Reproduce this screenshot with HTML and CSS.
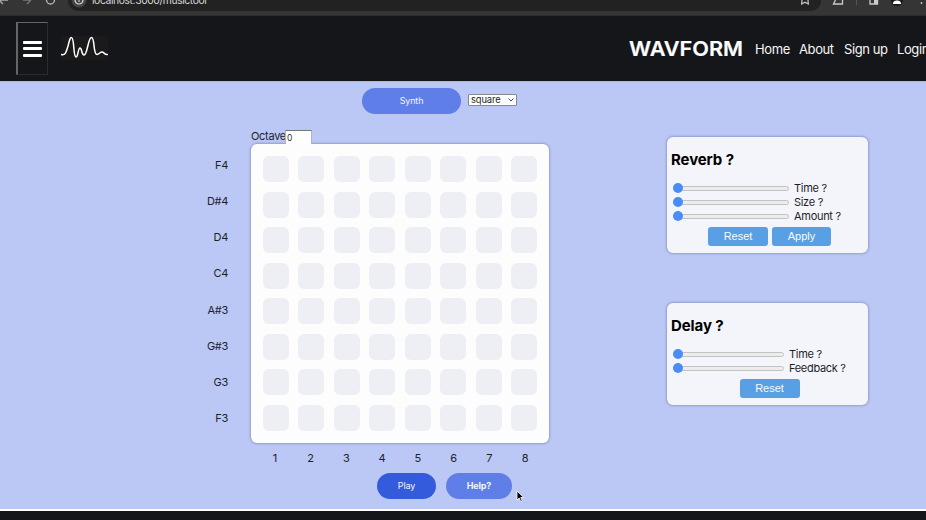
FILE: index.html
```html
<!DOCTYPE html>
<html lang="en">
<head>
<meta charset="utf-8">
<title>Wavform</title>
<link rel="stylesheet" href="styles.css">
</head>
<body>
<div class="browser">
  <svg class="browser-nav" width="62" height="15" viewBox="0 0 62 15" fill="none" stroke-width="1.3">
    <path d="M8 0H0M3 4L-1 0" stroke="#aaa"/><path d="M23 0h8M27 4l4-4" stroke="#777"/><path d="M46.5 0a4 4 0 0 0 8 0" stroke="#bbb"/>
  </svg>
  <div class="address">
    <svg width="18" height="15" viewBox="0 0 18 15" fill="none"><circle cx="9" cy="0" r="7.5" fill="#444"/><circle cx="9" cy="0" r="4" stroke="#ddd" stroke-width="1.2"/><path d="M9 0v2" stroke="#ddd"/></svg>
    <span class="url">localhost:3000/musictool</span>
    <svg class="star" width="12" height="15" viewBox="0 0 12 15" fill="none" stroke="#ccc" stroke-width="1.2"><path d="M3 0l-.3 4L6 2.2 9.3 4 9 0"/></svg>
  </div>
  <svg class="browser-tools" width="105" height="15" viewBox="0 0 105 15" fill="none">
    <path d="M14.500 0L12.500 4H21.500V0" stroke="#ccc" stroke-width="1.3"/><path d="M35.500 0v5" stroke="#555"/>
    <path d="M49 0v4h7.500V0" stroke="#ccc" stroke-width="1.3"/><path d="M53 0h4v4h-4z" fill="#ccc"/>
    <circle cx="76" cy="0" r="6" fill="#171717"/><path d="M72 4c0-3 2-3.500 4-3.500s4 .5 4 3.500z" fill="#fff"/>
    <circle cx="100.500" cy="3" r=".9" fill="#ccc"/>
  </svg>
</div>
<header class="header">
  <button class="menu" aria-label="Menu"><i></i><i></i><i></i></button>
  <svg class="wave" width="47" height="24" viewBox="0 0 47 24"><path class="wave-bg" d="M0 0h47v24H0z"/><path class="wave-line" d="M0 18.500C4 20 5 17 7 10C8.500 4 9 1.500 10.500 1.500C13.500 1.500 12 20.500 15 21C17 21.500 17 12 19 12C21 12 20.500 19 23 19C26.500 19 27 1.500 30.500 1.500C34 1.500 32 18.500 36 18.500C38 18.500 39 16 41 16C43 16 43.500 19 46.500 18.500"/></svg>
  <nav class="nav">
    <svg class="brand" width="116" height="24"><text x="0" y="17.500" textLength="114" lengthAdjust="spacingAndGlyphs">WAVFORM</text></svg>
    <a class="home">Home</a><a class="about">About</a><a class="signup">Sign up</a><a class="login">Login</a>
  </nav>
</header>
<main class="main">
  <div class="toolbar">
    <button class="pill synth">Synth</button>
    <div class="select"><span>square</span><svg width="8" height="6" viewBox="0 0 8 6"><path d="M1.500 1.500l2.500 2.500 2.500-2.500" fill="none" stroke="#333" stroke-width=".9"/></svg></div>
  </div>
  <div class="workspace">
    <div class="notes"><span>F4</span><span>D#4</span><span>D4</span><span>C4</span><span>A#3</span><span>G#3</span><span>G3</span><span>F3</span></div>
    <section class="sequencer">
      <label class="octave"><span>Octave</span><input value="0"></label>
      <div class="board">
        <i></i><i></i><i></i><i></i><i></i><i></i><i></i><i></i>
        <i></i><i></i><i></i><i></i><i></i><i></i><i></i><i></i>
        <i></i><i></i><i></i><i></i><i></i><i></i><i></i><i></i>
        <i></i><i></i><i></i><i></i><i></i><i></i><i></i><i></i>
        <i></i><i></i><i></i><i></i><i></i><i></i><i></i><i></i>
        <i></i><i></i><i></i><i></i><i></i><i></i><i></i><i></i>
        <i></i><i></i><i></i><i></i><i></i><i></i><i></i><i></i>
        <i></i><i></i><i></i><i></i><i></i><i></i><i></i><i></i>
      </div>
      <div class="steps"><span>1</span><span>2</span><span>3</span><span>4</span><span>5</span><span>6</span><span>7</span><span>8</span></div>
      <div class="actions"><button class="pill play">Play</button><button class="pill help">Help?</button></div>
    </section>
    <aside class="effects">
      <section class="card reverb">
        <h2>Reverb ?</h2>
        <div class="row"><div class="slider"></div><span>Time ?</span></div>
        <div class="row"><div class="slider"></div><span>Size ?</span></div>
        <div class="row"><div class="slider"></div><span>Amount ?</span></div>
        <div class="buttons"><button>Reset</button><button class="apply">Apply</button></div>
      </section>
      <section class="card delay">
        <h2>Delay ?</h2>
        <div class="row"><div class="slider"></div><span>Time ?</span></div>
        <div class="row"><div class="slider"></div><span>Feedback ?</span></div>
        <div class="buttons"><button>Reset</button></div>
      </section>
    </aside>
  </div>
</main>
<footer class="footer"></footer>
<svg class="cursor" width="10" height="13" viewBox="0 0 10 13"><path d="M1 1v9l2.200-2 1.500 3.500 1.500-.7L4.700 7.500h3z" fill="#000" stroke="#fff" stroke-width=".8"/></svg>
</body>
</html>
```
FILE: styles.css
```css
* { box-sizing: border-box; }
body {
  margin: 0;
  width: 926px;
  height: 520px;
  overflow: hidden;
  background: #fff;
  color: #1d1f2b;
  font-family: Inter, "Liberation Sans", sans-serif;
  font-size: 11px;
}
button { border: 0; padding: 0; margin: 0; }

.browser { display: flex; height: 16px; background: #353535; overflow: hidden; border-bottom: 1px solid #2c2c2c; }
.browser-nav { flex: none; margin-right: 6px; }
.address { display: flex; width: 753px; height: 11px; padding-left: 2px; background: #222; border-radius: 0 0 10px 10px; }
.url { margin: -6px 0 0 4px; color: #d5d5d5; font-size: 10px; line-height: 12px; letter-spacing: -.38px; font-size: 10.300px; }
.star { margin: 0 10px 0 auto; }
.browser-tools { flex: none; }

.header { display: flex; height: 65px; background: #15161a; }
.menu {
  display: flex; flex-direction: column; align-items: center; justify-content: center; gap: 3.500px;
  flex: none; width: 32px; height: 53px; margin: 6px 13px 0 16px;
  background: transparent; border: 1px solid #2b2c2e; border-top-color: #65666a; border-left: 2px solid #65666a;
}
.menu i { width: 19px; height: 3px; background: #fff; border-radius: 1px; }
.wave { flex: none; margin-top: 20px; }
.wave-bg { fill: #1a1a1a; }
.wave-line { fill: none; stroke: #fff; stroke-width: 1.500; stroke-linecap: round; }
.nav { display: flex; flex: none; margin-left: 521px; padding-top: 22px; color: #f7f7f7; font-size: 13px; line-height: 22px; white-space: nowrap; }
.brand { flex: none; margin-right: 10px; }
.brand text { font: 600 20.500px Inter, sans-serif; fill: #fff; stroke: #fff; stroke-width: .2; }
.nav a { flex: none; letter-spacing: -.4px; }
.home { width: 44px; }
.about { width: 45px; }
.signup { width: 53px; }

.main { height: 428px; background: #bbc7f4; border-top: 1px solid #a9b4dd; }
.toolbar { display: flex; padding: 6px 0 0 362px; height: 48px; }
.pill { height: 26px; padding-bottom: 1px; border-radius: 13px; background: #5f7ee7; color: #f4f6ff; font: 9px Inter, sans-serif; letter-spacing: -.15px; }
.synth { width: 99px; margin-right: 7px; }
.select {
  display: flex; align-items: center; justify-content: space-between;
  width: 49px; height: 12px; margin-top: 6px; padding: 0 1px 0 2px;
  background: #fff; border: 1px solid #858890; border-radius: 1px;
  color: #222; font-size: 9.300px; line-height: 10px; letter-spacing: -.1px;
}
.select span { margin-top: -1px; }

.workspace { display: flex; height: 379px; }
.notes { display: flex; flex-direction: column; width: 228px; margin-right: 23px; padding-top: 17px; text-align: right; letter-spacing: -.3px; }
.notes span { height: 36.150px; line-height: 36px; }
.sequencer { width: 298px; margin-right: 118px; }
.octave { display: flex; height: 14px; line-height: 13px; letter-spacing: -.3px; }
.octave span { width: 34px; white-space: nowrap; }
.octave input {
  width: 27px; height: 14px; padding: 0 1px; border: 1px solid #b5b5b5; border-top-color: #777; border-bottom: 0;
  background: #fff; color: #333; font: 8.500px Inter, sans-serif;
}
.board {
  display: grid; grid-template-columns: repeat(8, 26px); grid-auto-rows: 26px; gap: 9.570px 9.470px;
  width: 298px; height: 299px; padding: 12px;
  background: #fdfdfd; border-radius: 6px; box-shadow: 0 0 3px rgba(50, 60, 110, .6);
}
.board i { background: #eeeff4; border-radius: 6px; }
.steps { display: flex; height: 30px; padding-left: 6px; line-height: 30px; text-align: center; }
.steps span { width: 35.750px; }
.actions { display: flex; gap: 10px; padding-left: 126px; }
.play { width: 59px; background: #355bdd; }
.help { width: 66px; font-weight: 700; }

.effects { width: 202px; padding-top: 7px; }
.card {
  width: 201px; padding: 0 5px; background: #f3f5fa; border-radius: 6px;
  box-shadow: 0 0 3px rgba(50, 60, 110, .6);
}
.reverb { height: 116px; margin-bottom: 50px; }
.delay { height: 102px; }
.card h2 { margin: 0 0 0 -1px; height: 44px; padding-top: 13px; color: #000; font-size: 15px; line-height: 19px; letter-spacing: -.1px; }
.row { display: flex; align-items: center; height: 14.100px; white-space: nowrap; letter-spacing: -.3px; }
.slider { position: relative; width: 116px; height: 5px; margin: 0 5px 0 1px; background: #ececec; border: 1px solid #c3c3c3; border-radius: 3px; }
.delay .slider { width: 111px; }
.slider::before { content: ""; position: absolute; left: -1px; top: -4px; width: 10px; height: 10px; border-radius: 50%; background: #4b8df8; }
.buttons { display: flex; justify-content: center; gap: 4px; padding: 4px 0 0 4px; }
.buttons button { width: 60px; height: 19px; padding-bottom: 1px; border-radius: 3px; background: #58a0e3; color: #f7faff; font: 11px "Liberation Sans", sans-serif; }
.buttons .apply { width: 59px; }

.footer { height: 9px; margin-top: 2px; background: #15161a; }
.cursor { position: absolute; left: 516px; top: 490px; }
```
